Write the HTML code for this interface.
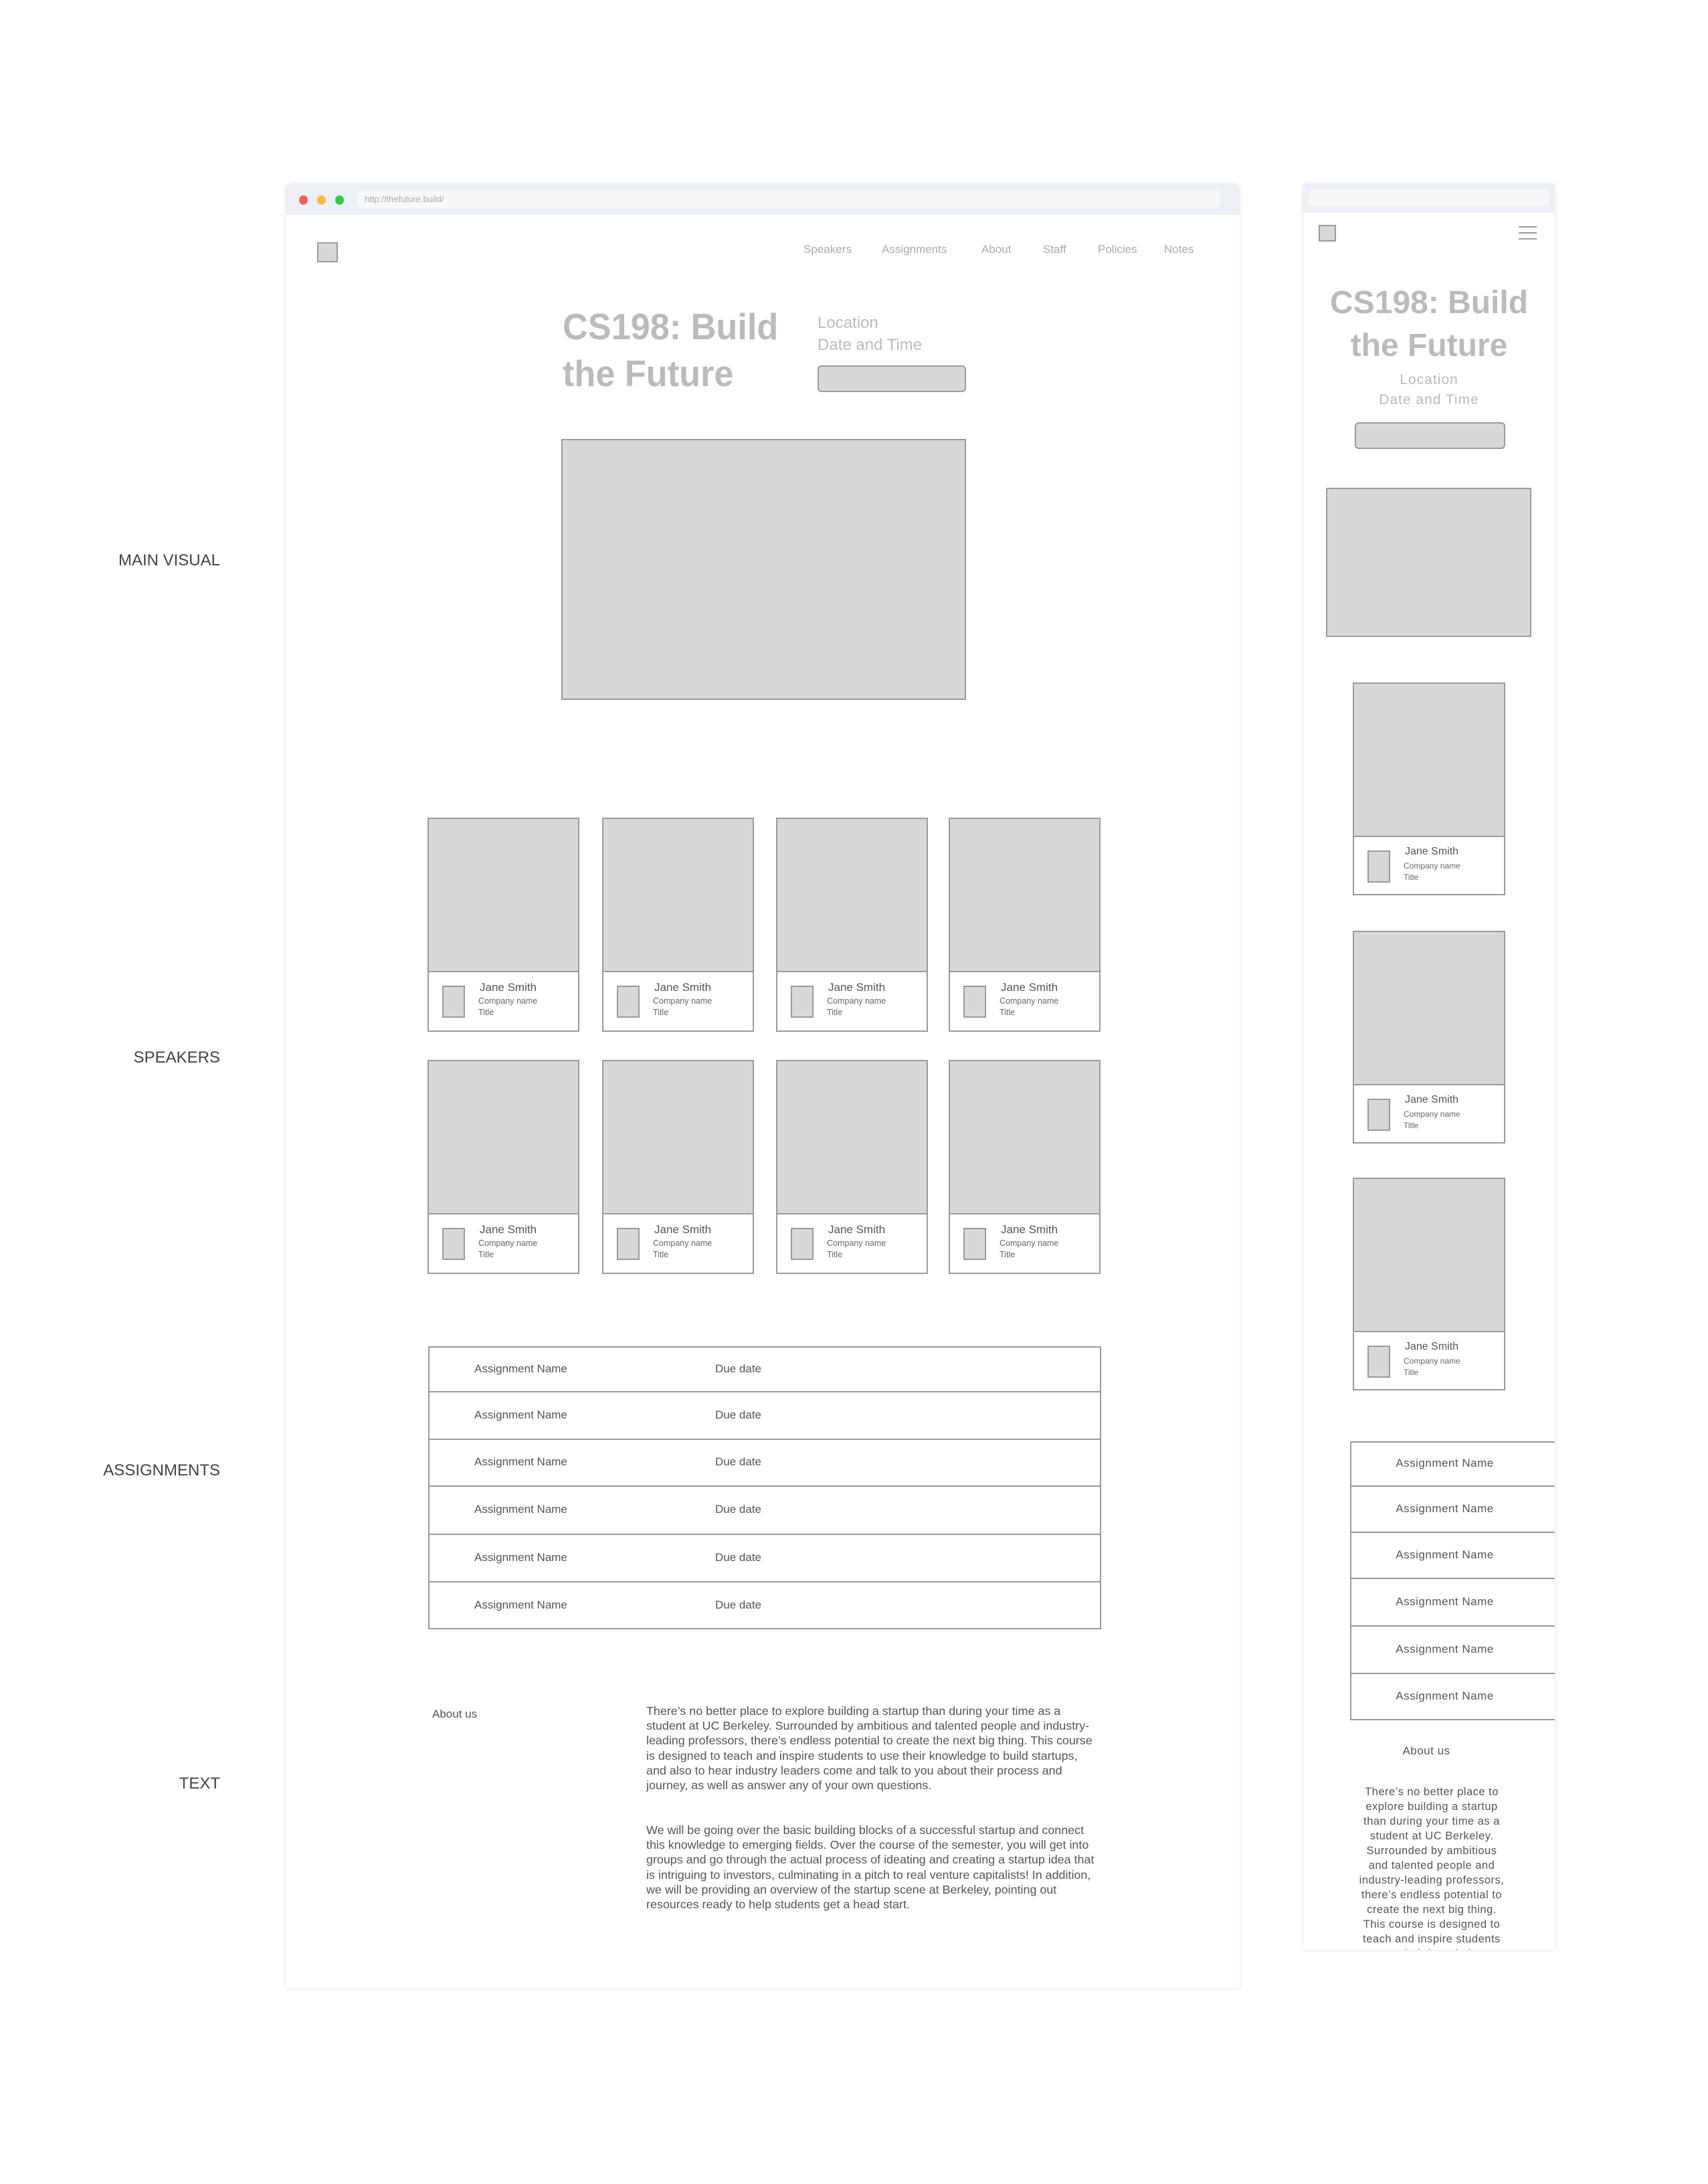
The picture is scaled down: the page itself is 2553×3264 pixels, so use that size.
<!DOCTYPE html>
<html><head><meta charset="utf-8">
<style>
*{margin:0;padding:0;box-sizing:border-box}
body{width:2553px;height:3264px;background:#fff;position:relative;overflow:hidden;font-family:"Liberation Sans",sans-serif;color:#555}
.a{position:absolute}
.n{font-family:"Liberation Sans",sans-serif}
.ph{position:absolute;background:#d8d8d8;border:2px solid #9b9b9b}
.t{position:absolute;white-space:nowrap;line-height:1}
.lbl{position:absolute;right:2224px;font-size:24px;color:#444;white-space:nowrap;line-height:1}
.card{position:absolute;border:2px solid #9b9b9b;background:#fff}
.card .img{position:absolute;left:0;top:0;right:0;background:#d8d8d8;border-bottom:2px solid #9b9b9b}
.card .th{position:absolute;left:20px;width:34px;height:48px;background:#d8d8d8;border:2px solid #9b9b9b}
.row{position:absolute;border-top:2px solid #9b9b9b}
.sx{transform:scaleX(0.95);transform-origin:left top}
</style></head><body>

<div class="lbl" style="top:826px">MAIN VISUAL</div>
<div class="lbl" style="top:1569px">SPEAKERS</div>
<div class="lbl" style="top:2186px">ASSIGNMENTS</div>
<div class="lbl" style="top:2654px">TEXT</div>

<div class="a" style="left:427px;top:275px;width:1426px;height:2696px;background:#fff;border-radius:10px 10px 0 0;box-shadow:0 0 6px rgba(0,0,0,0.12)"></div>
<div class="a" style="left:427px;top:275px;width:1426px;height:46px;background:#edf0f4;border-radius:10px 10px 0 0"></div>
<div class="a" style="left:447px;top:292px;width:13px;height:14px;border-radius:50%;background:#fc605c"></div>
<div class="a" style="left:474px;top:292px;width:13px;height:14px;border-radius:50%;background:#fdbc40"></div>
<div class="a" style="left:501px;top:292px;width:13px;height:14px;border-radius:50%;background:#34c84a"></div>
<div class="a" style="left:534px;top:285px;width:1290px;height:26px;background:#f7f8fa;border-radius:6px"></div>
<div class="t n" style="left:545px;top:291px;font-size:13px;color:#aaa">http://thefuture.build/</div>

<div class="ph" style="left:474px;top:362px;width:31px;height:30px"></div>
<div class="t n" style="left:1201px;top:364px;font-size:17px;color:#aaa">Speakers</div>
<div class="t n" style="left:1318px;top:364px;font-size:17px;color:#aaa">Assignments</div>
<div class="t n" style="left:1467px;top:364px;font-size:17px;color:#aaa">About</div>
<div class="t n" style="left:1559px;top:364px;font-size:17px;color:#aaa">Staff</div>
<div class="t n" style="left:1641px;top:364px;font-size:17px;color:#aaa">Policies</div>
<div class="t n" style="left:1740px;top:364px;font-size:17px;color:#aaa">Notes</div>

<div class="t n sx" style="left:841px;top:461px;font-size:55px;font-weight:bold;color:#bbb">CS198: Build</div>
<div class="t n sx" style="left:841px;top:531px;font-size:55px;font-weight:bold;color:#bbb">the Future</div>
<div class="t n" style="left:1222px;top:471px;font-size:24px;color:#bbb">Location</div>
<div class="t n" style="left:1222px;top:504px;font-size:24px;color:#bbb">Date and Time</div>
<div class="ph" style="left:1222px;top:546px;width:222px;height:40px;border-radius:6px"></div>

<div class="ph" style="left:839px;top:656px;width:605px;height:390px"></div>

<div id="cards"></div>

<div class="a" style="left:640px;top:2012px;width:1006px;height:423px;border:2px solid #9b9b9b"></div>
<div class="row" style="left:640px;top:2079px;width:1006px"></div>
<div class="row" style="left:640px;top:2150px;width:1006px"></div>
<div class="row" style="left:640px;top:2220px;width:1006px"></div>
<div class="row" style="left:640px;top:2292px;width:1006px"></div>
<div class="row" style="left:640px;top:2363px;width:1006px"></div>
<div id="trows"></div>

<div class="t n" style="left:646px;top:2553px;font-size:17px;color:#555">About us</div>
<div class="a n" style="left:966px;top:2546px;font-size:17.9px;line-height:22.2px;color:#555;white-space:nowrap">There’s no better place to explore building a startup than during your time as a<br>student at UC Berkeley. Surrounded by ambitious and talented people and industry-<br>leading professors, there’s endless potential to create the next big thing. This course<br>is designed to teach and inspire students to use their knowledge to build startups,<br>and also to hear industry leaders come and talk to you about their process and<br>journey, as well as answer any of your own questions.</div>
<div class="a n" style="left:966px;top:2724px;font-size:17.9px;line-height:22.2px;color:#555;white-space:nowrap">We will be going over the basic building blocks of a successful startup and connect<br>this knowledge to emerging fields. Over the course of the semester, you will get into<br>groups and go through the actual process of ideating and creating a startup idea that<br>is intriguing to investors, culminating in a pitch to real venture capitalists! In addition,<br>we will be providing an overview of the startup scene at Berkeley, pointing out<br>resources ready to help students get a head start.</div>

<div class="a" style="left:1948px;top:275px;width:376px;height:2639px;background:#fff;box-shadow:0 0 6px rgba(0,0,0,0.12);overflow:hidden">
  <div class="a" style="left:0;top:0;width:376px;height:43px;background:#edf0f4"></div>
  <div class="a" style="left:8px;top:8px;width:360px;height:26px;background:#f7f8fa;border-radius:8px"></div>
  <div class="ph" style="left:23px;top:61px;width:26px;height:25px"></div>
  <div class="a" style="left:322px;top:63px;width:27px;height:2px;background:#999"></div>
  <div class="a" style="left:322px;top:72px;width:27px;height:2px;background:#999"></div>
  <div class="a" style="left:322px;top:81px;width:27px;height:2px;background:#999"></div>
  <div class="t" style="left:0;width:376px;text-align:center;top:154px;font-size:48px;font-weight:bold;color:#bbb">CS198: Build</div>
  <div class="t" style="left:0;width:376px;text-align:center;top:218px;font-size:48px;font-weight:bold;color:#bbb">the Future</div>
  <div class="t" style="left:0;width:376px;text-align:center;top:282px;font-size:21px;color:#bbb;letter-spacing:1px">Location</div>
  <div class="t" style="left:0;width:376px;text-align:center;top:312px;font-size:21px;color:#bbb;letter-spacing:1px">Date and Time</div>
  <div class="ph" style="left:77px;top:356px;width:225px;height:40px;border-radius:6px"></div>
  <div class="ph" style="left:34px;top:454px;width:307px;height:223px"></div>
  <div id="mcards"></div>
  <div class="a" style="left:70px;top:1879px;width:320px;height:417px;border:2px solid #9b9b9b"></div>
  <div class="t" style="left:0;width:368px;text-align:center;top:2333px;font-size:17px;color:#555;letter-spacing:0.5px">About us</div>
  <div class="a" style="left:0;width:384px;text-align:center;top:2392px;font-size:16.5px;line-height:22px;color:#555;letter-spacing:0.5px;white-space:nowrap">There’s no better place to<br>explore building a startup<br>than during your time as a<br>student at UC Berkeley.<br>Surrounded by ambitious<br>and talented people and<br>industry-leading professors,<br>there’s endless potential to<br>create the next big thing.<br>This course is designed to<br>teach and inspire students<br>to use their knowledge to</div>
</div>

<script>
(function(){
 var xs=[639,900,1160,1418],ys=[1222,1584],h='';
 ys.forEach(function(y){xs.forEach(function(x){
  h+='<div class="card" style="left:'+x+'px;top:'+y+'px;width:227px;height:320px"><div class="img" style="height:229px"></div><div class="th" style="top:249px"></div>'+
  '<div class="t n" style="left:76px;top:243px;font-size:17px;color:#555">Jane Smith</div>'+
  '<div class="t n" style="left:74px;top:266px;font-size:12.5px;color:#666">Company name</div>'+
  '<div class="t n" style="left:74px;top:283px;font-size:12.5px;color:#666">Title</div></div>';
 });});
 document.getElementById('cards').innerHTML=h;
 var r='',rt=[2012,2079,2150,2220,2292,2363,2434];
 for(var i=0;i<6;i++){var c=(rt[i]+rt[i+1])/2-9;
  r+='<div class="t n" style="left:709px;top:'+c+'px;font-size:17px;color:#555">Assignment Name</div><div class="t n" style="left:1069px;top:'+c+'px;font-size:17px;color:#555">Due date</div>';}
 document.getElementById('trows').innerHTML=r;
 var m='',my=[745,1116,1485];
 my.forEach(function(y){
  m+='<div class="card" style="left:74px;top:'+y+'px;width:228px;height:318px"><div class="img" style="height:229px"></div><div class="th" style="top:249px"></div>'+
  '<div class="t" style="left:76px;top:243px;font-size:16px;color:#555">Jane Smith</div>'+
  '<div class="t" style="left:74px;top:266px;font-size:12px;color:#666">Company name</div>'+
  '<div class="t" style="left:74px;top:283px;font-size:12px;color:#666">Title</div></div>';
 });
 var mr=[1879,1945,2014,2083,2154,2225,2295];
 for(var k=0;k<6;k++){
  if(k>0)m+='<div class="row" style="left:70px;top:'+mr[k]+'px;width:320px"></div>';
  var cy=(mr[k]+mr[k+1])/2-9;
  m+='<div class="t" style="left:70px;width:283px;text-align:center;top:'+cy+'px;font-size:17px;color:#555;letter-spacing:0.5px">Assignment Name</div>';
 }
 document.getElementById('mcards').innerHTML=m;
})();
</script>
</body></html>
